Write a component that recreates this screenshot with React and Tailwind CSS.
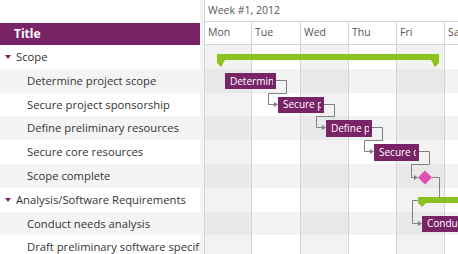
import React from 'react'

const FONT = { fontFamily: '"Open Sans", "Noto Sans", sans-serif' }
const ROW = 23.8

const rows = [
  { title: 'Scope', summary: true },
  { title: 'Determine project scope' },
  { title: 'Secure project sponsorship' },
  { title: 'Define preliminary resources' },
  { title: 'Secure core resources' },
  { title: 'Scope complete' },
  { title: 'Analysis/Software Requirements', summary: true },
  { title: 'Conduct needs analysis' },
  { title: 'Draft preliminary software specifications' },
]

const days = [
  { label: 'Mon', w: 'w-[47px]', shade: true },
  { label: 'Tue', w: 'w-[49px]', shade: false },
  { label: 'Wed', w: 'w-[48px]', shade: true },
  { label: 'Thu', w: 'w-[48px]', shade: false },
  { label: 'Fri', w: 'w-[48px]', shade: true },
  { label: 'Sat', w: 'w-[60px]', shade: false },
]

// gantt data, x in px from the timeline's left edge
const tasks = [
  { row: 1, left: 20, right: 71, title: 'Determine project scope' },
  { row: 2, left: 73, right: 119, title: 'Secure project sponsorship' },
  { row: 3, left: 121, right: 167, title: 'Define preliminary resources' },
  { row: 4, left: 169, right: 214, title: 'Secure core resources' },
  { row: 7, left: 217, right: 275, title: 'Conduct needs analysis' },
]

const rowTop = (r) => r * ROW
const cy = (r) => Math.round(rowTop(r) + 12) - 0.5

function cellColor(r, c) {
  const rowShade = r % 2 === 1
  const colShade = days[c].shade
  if (rowShade && colShade) return 'bg-[#e8e8e8]'
  if (rowShade || colShade) return 'bg-[#f2f2f2]'
  return 'bg-white'
}

function Arrow({ x, y }) {
  return <polygon points={`${x - 4},${y - 2.5} ${x},${y} ${x - 4},${y + 2.5}`} fill="#808080" />
}

function Connectors() {
  const lines = []
  for (let i = 0; i < 3; i++) {
    const a = tasks[i]
    const b = tasks[i + 1]
    const y1 = cy(a.row)
    const y2 = cy(b.row)
    const by = Math.round(rowTop(b.row)) + 0.5
    const vx = a.right + 10.5
    const bx = b.left - 9.5
    lines.push(
      <g key={i}>
        <polyline
          points={`${a.right},${y1} ${vx},${y1} ${vx},${by} ${bx},${by} ${bx},${y2} ${b.left - 3},${y2}`}
          fill="none"
          stroke="#808080"
        />
        <Arrow x={b.left} y={y2} />
      </g>
    )
  }
  const d = tasks[3]
  const dy = 132.5
  return (
    <svg className="absolute left-0 top-0" width="260" height="215">
      {lines}
      {/* secure core -> milestone */}
      <polyline
        points={`${d.right},${cy(4)} 224.5,${cy(4)} 224.5,119.5 206.5,119.5 206.5,${dy} 210,${dy}`}
        fill="none"
        stroke="#808080"
      />
      <Arrow x={213} y={dy} />
      {/* milestone -> analysis summary */}
      <polyline points={`227,${dy} 234.5,${dy} 234.5,152`} fill="none" stroke="#808080" />
      {/* analysis summary -> conduct */}
      <polyline
        points={`213,155.5 207.5,155.5 207.5,${cy(7)} 214,${cy(7)}`}
        fill="none"
        stroke="#808080"
      />
      <Arrow x={217} y={cy(7)} />
      {/* summary bars */}
      <polygon points="12,9 234,9 234,18 230,22 226,15 20,15 16,22 12,18" fill="#8cc21f" />
      <polygon points="213,152 260,152 260,158 221,158 217,162 213,158" fill="#8cc21f" />
      {/* milestone */}
      <polygon points={`220,${dy - 7} 227,${dy} 220,${dy + 7} 213,${dy}`} fill="#e04fb5" />
    </svg>
  )
}

function Triangle() {
  return (
    <svg width="6" height="5" viewBox="0 0 6 5" className="mr-[5px] shrink-0">
      <polygon points="0,0 6,0 3,4" fill="#7a2468" />
    </svg>
  )
}

export default function App() {
  return (
    <div className="flex w-[458px] h-[254px] overflow-hidden bg-white text-[#333]" style={FONT}>
      {/* grid column */}
      <div className="w-[200px] shrink-0 flex flex-col overflow-hidden">
        <div className="h-[23px] shrink-0" />
        <div className="h-[22px] shrink-0 bg-[#7a2468] text-white font-bold text-[12px] flex items-center pl-[14px]">
          Title
        </div>
        {rows.map((r, i) => (
          <div
            key={i}
            className={`h-[23.8px] shrink-0 flex items-center whitespace-nowrap text-[11.25px] pt-[1px] ${
              i % 2 === 1 ? 'bg-[#f4f4f4]' : 'bg-white'
            } ${r.summary ? 'pl-[5px]' : 'pl-[27px]'}`}
          >
            {r.summary && <Triangle />}
            {r.title}
          </div>
        ))}
      </div>

      {/* splitter */}
      <div className="w-[4px] shrink-0 bg-[#f3f3f3]" />

      {/* timeline */}
      <div className="flex-1 flex flex-col border-l border-[#d4d4d4] overflow-hidden">
        <div className="h-[22px] shrink-0 border-b border-[#d4d4d4] flex items-center pl-[3px] text-[10.5px] text-[#555] whitespace-nowrap">
          Week #1, 2012
        </div>
        <div className="h-[23px] shrink-0 border-b border-[#d4d4d4] flex">
          {days.map((d) => (
            <div
              key={d.label}
              className={`${d.w} shrink-0 border-r border-[#d4d4d4] pl-[3px] pt-[3px] text-[10.5px] text-[#555]`}
            >
              {d.label}
            </div>
          ))}
        </div>
        <div className="relative flex-1">
          {rows.map((r, i) => (
            <div key={i} className="h-[23.8px] flex">
              {days.map((d, c) => (
                <div key={d.label} className={`${d.w} shrink-0 border-r border-[#d4d4d4] ${cellColor(i, c)}`} />
              ))}
            </div>
          ))}
          <Connectors />
          {tasks.map((t) => (
            <div
              key={t.title}
              className="absolute h-[16.5px] bg-[#7a2468] text-white text-[10px] flex items-center pl-[5px] pr-[3px]"
              style={{ left: t.left, width: t.right - t.left, top: rowTop(t.row) + 4 }}
            >
              <span className="block overflow-hidden whitespace-nowrap">{t.title}</span>
            </div>
          ))}
        </div>
      </div>
    </div>
  )
}
